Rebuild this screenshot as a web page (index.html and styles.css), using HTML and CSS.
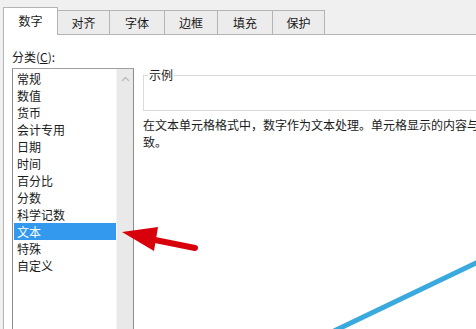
FILE: index.html
```html
<!DOCTYPE html>
<html lang="zh-CN">
<head>
    <meta charset="UTF-8">
    <meta name="viewport" content="width=device-width, initial-scale=1.0">
    <title>设置单元格格式</title>
    <link rel="stylesheet" href="styles.css">
</head>
<body>

<div class="window">
    <!-- Tabs -->
    <div class="tabs">
        <div class="tab active w55">数字</div>
        <div class="tab w53">对齐</div>
        <div class="tab w56">字体</div>
        <div class="tab w54">边框</div>
        <div class="tab w56">填充</div>
        <div class="tab w53">保护</div>
    </div>

    <!-- Number page -->
    <div class="panel">
        <div class="left">
            <div class="label">分类(<u>C</u>):</div>
            <div class="listbox">
                <div class="items">
                    <div class="item">常规</div>
                    <div class="item">数值</div>
                    <div class="item">货币</div>
                    <div class="item">会计专用</div>
                    <div class="item">日期</div>
                    <div class="item">时间</div>
                    <div class="item">百分比</div>
                    <div class="item">分数</div>
                    <div class="item">科学记数</div>
                    <div class="item selected">文本</div>
                    <div class="item">特殊</div>
                    <div class="item">自定义</div>
                </div>
                <div class="scrollbar">
                    <svg class="up" width="9" height="6" viewBox="0 0 9 6">
                        <path d="M1 5 L4.5 1.5 L8 5" fill="none" stroke="#bdbdbd" stroke-width="1.4"/>
                    </svg>
                </div>
            </div>
        </div>

        <div class="right">
            <fieldset class="sample">
                <legend>示例</legend>
            </fieldset>
            <p class="desc">在文本单元格格式中，数字作为文本处理。单元格显示的内容与输入的内容完全一<br>致。</p>
        </div>
    </div>
</div>

<!-- annotation drawn over the screenshot -->
<svg class="overlay" width="476" height="329" viewBox="0 0 476 329">
    <line x1="150" y1="239" x2="195" y2="248" stroke="#d8000a" stroke-width="6" stroke-linecap="round"/>
    <polygon points="122,232 158,227 154,251" fill="#d8000a"/>
    <line x1="334" y1="331" x2="478" y2="262" stroke="#3aa9de" stroke-width="5"/>
</svg>

</body>
</html>
```

FILE: styles.css
```css
body {
    margin: 0;
    background-color: #f0f0f0;
    font-family: "Noto Sans CJK SC", "Liberation Sans", sans-serif;
    font-size: 12px;
    color: #1a1a1a;
    overflow: hidden;
    width: 476px;
    height: 329px;
    position: relative;
}

.window {
    padding: 7px 0 0 3px;
}

.tabs {
    display: flex;
    align-items: flex-end;
    height: 27px;
    border-bottom: 1px solid #b4b4b4;
}

.tab {
    box-sizing: border-box;
    height: 24px;
    border: 1px solid #b4b4b4;
    border-bottom: none;
    background-color: #ececec;
    margin-left: -1px;
    display: flex;
    align-items: center;
    justify-content: center;
    line-height: 14px;
}

.tab.active {
    height: 28px;
    margin-left: 0;
    margin-bottom: -1px;
    background-color: #ffffff;
    position: relative;
    z-index: 1;
    padding-bottom: 2px;
}

.w53 { width: 53px; }
.w54 { width: 54px; }
.w55 { width: 55px; }
.w56 { width: 56px; }

.panel {
    box-sizing: border-box;
    display: flex;
    height: 294px;
    background-color: #ffffff;
    border-left: 1px solid #b4b4b4;
    padding: 13px 0 0 8px;
    overflow: hidden;
}

.left {
    width: 122px;
    flex-shrink: 0;
}

.label {
    line-height: 17px;
    margin-bottom: 3px;
}

.listbox {
    display: flex;
    height: 262px;
    border: 1px solid #8c8c8c;
    border-top-color: #a0a0a0;
    border-bottom: none;
}

.items {
    flex: 1;
    padding: 1px 0 0 1px;
}

.item {
    line-height: 17px;
    padding-left: 3px;
}

.item.selected {
    background-color: #3399ee;
    color: #ffffff;
}

.scrollbar {
    width: 16px;
    background-color: #e9e9e9;
    border-left: 1px solid #f4f4f4;
    display: flex;
    justify-content: center;
}

.up {
    margin-top: 7px;
}

.right {
    margin-left: 9px;
    padding-top: 20px;
    flex: 1;
    min-width: 0;
}

.sample {
    margin: 0;
    padding: 0;
    height: 41px;
    border: 1px solid #dadada;
    border-right: none;
}

.sample legend {
    padding: 0 1px;
    margin-left: 4px;
    line-height: 14px;
}

.desc {
    white-space: nowrap;
    margin: 5px 0 0 0;
    line-height: 17px;
}

.overlay {
    position: absolute;
    left: 0;
    top: 0;
}
```
